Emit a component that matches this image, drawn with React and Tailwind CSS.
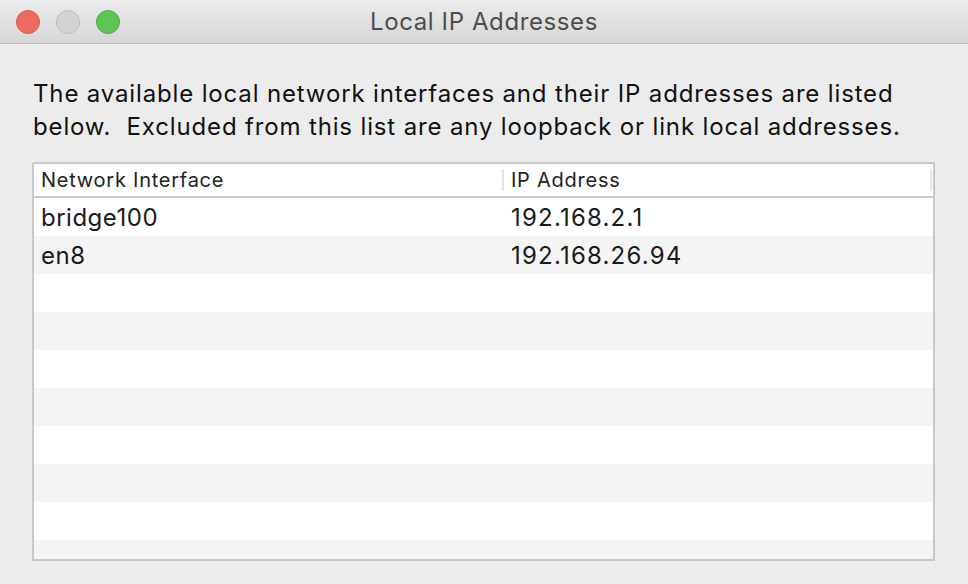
const rows = [
  { iface: "bridge100", ip: "192.168.2.1" },
  { iface: "en8", ip: "192.168.26.94" },
  ...Array.from({ length: 8 }, () => ({ iface: "", ip: "" })),
];

const font = { fontFamily: "Inter, 'Liberation Sans', sans-serif" };

export default function App() {
  return (
    <div className="w-[968px] h-[584px] bg-[#ececec] flex flex-col overflow-hidden" style={font}>
      {/* title bar */}
      <div className="relative h-[44px] shrink-0 bg-gradient-to-b from-[#ececec] to-[#d6d6d6] border-b border-[#c2c2c2] flex items-center justify-center">
        <div className="absolute left-[16px] top-[10px] flex gap-[16px]">
          <span className="w-[24px] h-[24px] rounded-full bg-[#ee6a5f] border border-[#d8574c]" />
          <span className="w-[24px] h-[24px] rounded-full bg-[#d3d3d3] border border-[#bcbcbc]" />
          <span className="w-[24px] h-[24px] rounded-full bg-[#5fc453] border border-[#4ca940]" />
        </div>
        <span className="text-[24px] tracking-[0.6px] text-[#4d4d4d] mt-[1px]">Local IP Addresses</span>
      </div>

      {/* body */}
      <div className="flex-1 flex flex-col pl-[32px] pr-[33px]">
        <p className="mt-[33px] pl-[1px] text-[24px] tracking-[0.85px] leading-[33px] text-[#111] whitespace-pre">
          {"The available local network interfaces and their IP addresses are listed\nbelow.  Excluded from this list are any loopback or link local addresses."}
        </p>

        <div className="mt-[19px] h-[399px] border-2 border-[#c8c8c8] bg-white flex flex-col overflow-hidden">
          <div className="h-[34px] shrink-0 flex items-center border-b-2 border-[#cbcbcb] text-[20px] tracking-[0.75px] text-[#222]">
            <div className="w-[468px] pl-[7px]">Network Interface</div>
            <div className="w-[2px] h-[22px] bg-[#e2e2e2]" />
            <div className="flex-1 pl-[7px]">IP Address</div>
            <div className="w-[2px] h-[22px] bg-[#e6e6e6] mr-[1px]" />
          </div>
          {rows.map((r, i) => (
            <div
              key={i}
              className={`h-[38px] shrink-0 flex items-center pt-[1px] text-[24px] tracking-[0.5px] text-[#1a1a1a] ${i % 2 ? "bg-[#f4f4f4]" : "bg-white"}`}
            >
              <div className="w-[470px] pl-[7px]">{r.iface}</div>
              <div className="flex-1 pl-[7px] tracking-[1.2px]">{r.ip}</div>
            </div>
          ))}
        </div>
      </div>
    </div>
  );
}
